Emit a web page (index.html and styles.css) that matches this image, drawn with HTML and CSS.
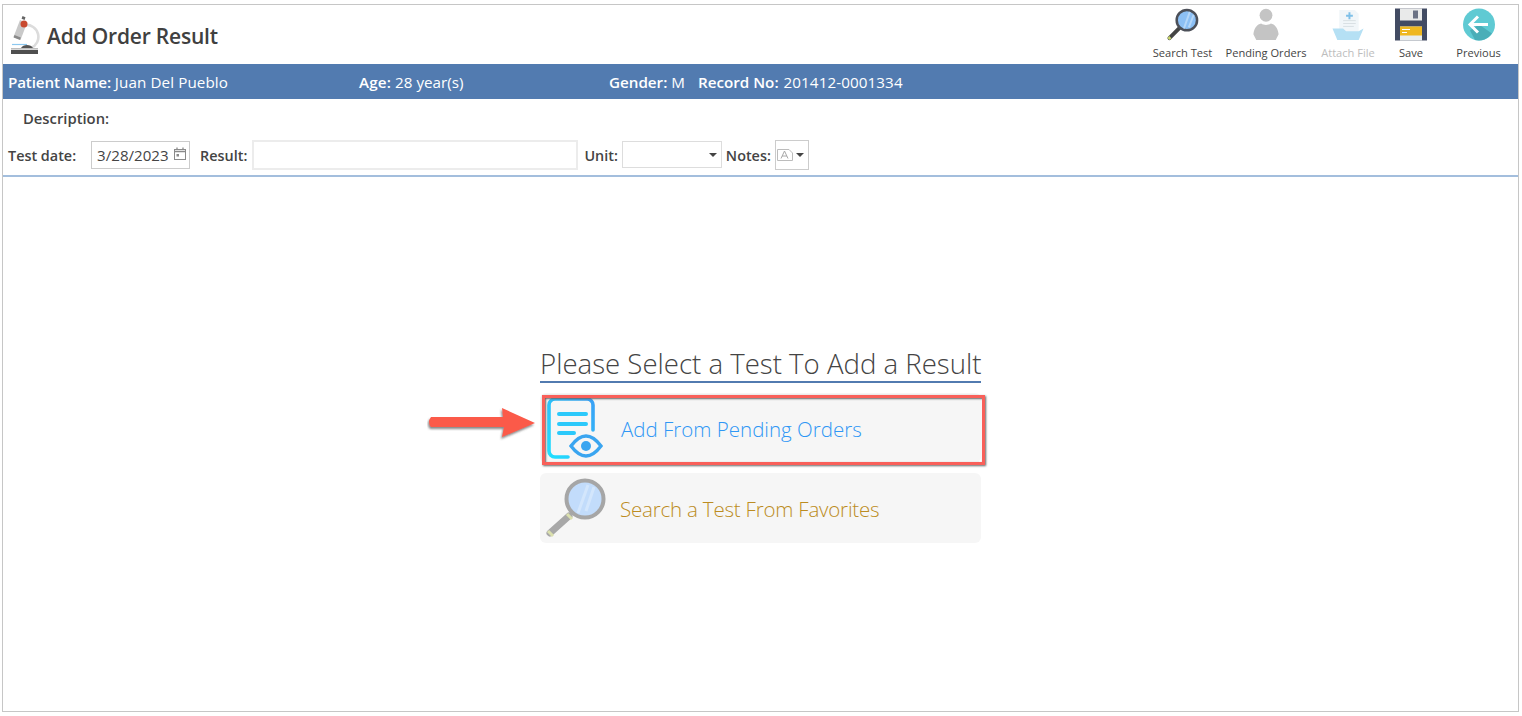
FILE: index.html
```html
<!DOCTYPE html>
<html lang="en">
<head>
<meta charset="utf-8">
<title>Add Order Result</title>
<link rel="stylesheet" href="styles.css">
</head>
<body>
<div class="frame">
  <header class="toolbar">
    <div class="title-wrap">
      <svg class="scope" viewBox="0 0 30 42" width="30" height="42">
        <path d="M15 10 A12 12 0 0 1 21 33" fill="none" stroke="#dcdcdc" stroke-width="2.600"/>
        <path d="M12.500 1 L15.500 2.200 L14.600 5 L11.600 3.800Z" fill="#666"/>
        <path d="M10 5 L17 8 L10.500 25 L3.500 22Z" fill="#c9c9c9"/>
        <path d="M4.500 20 L10.800 22.600 L10 25 L3.600 22.400Z" fill="#8a8a8a"/>
        <circle cx="14" cy="9" r="3.500" fill="#c8492f"/>
        <path d="M2 29.500 H17" stroke="#8cc8f0" stroke-width="1.200"/>
        <path d="M11 33 C13 29 21 29 23 33Z" fill="#555"/>
        <rect x="1" y="33" width="27" height="1.600" fill="#bdbdbd"/>
        <rect x="1" y="35" width="27" height="4" fill="#4f4f4f"/>
      </svg>
      <h1 class="title">Add Order Result</h1>
    </div>
    <nav class="actions">
      <div class="action act-search">
        <svg viewBox="0 0 34 34" width="34" height="34"><path d="M3 31 L14 20" stroke="#444" stroke-width="4" stroke-linecap="round"/><path d="M2 32 L4 30" stroke="#c8d66a" stroke-width="3"/><circle cx="21" cy="12.500" r="10.500" fill="#8cc0f5" stroke="#4c5059" stroke-width="2.600"/><path d="M24 4 L18 21 M28 7 L23 20" stroke="#b5d7f9" stroke-width="2"/></svg>
        <span>Search Test</span>
      </div>
      <div class="action act-pending">
        <svg viewBox="0 0 34 34" width="34" height="34"><circle cx="17" cy="7.500" r="6.600" fill="#c4c4c4"/><path d="M7 33 L4 27 C5 20 8 17 12 16 C15 18 19 18 22 16 C26 17 29 20 30 27 L27 33Z" fill="#c4c4c4"/></svg>
        <span>Pending Orders</span>
      </div>
      <div class="action act-attach muted">
        <svg viewBox="0 0 34 34" width="34" height="34"><path d="M8 2 H24 L28 6 V30 H8Z" fill="#f1f6f9"/><path d="M15 7 H17.500 V4.500 H19.500 V7 H22 V9 H19.500 V11.500 H17.500 V9 H15Z" fill="#7fc0e8"/><path d="M12 13 H25 M12 16 H25 M12 19 H23" stroke="#d8dfe3"/><path d="M1 21 H12 L15 24 L28 24 L33 21 L28 33 H6Z" fill="#b5e0f4"/></svg>
        <span>Attach File</span>
      </div>
      <div class="action act-save">
        <svg viewBox="0 0 32 32" width="32" height="32"><rect width="32" height="32" fill="#424b63"/><rect x="5" y="0" width="22" height="12" fill="#e9eaea"/><rect x="18" y="2" width="5" height="8" fill="#6b7285"/><rect x="5" y="18" width="22" height="14" fill="#e9eeee"/><rect x="5" y="18" width="22" height="9" fill="#efb81f"/><path d="M7 21 H15 M7 24 H12" stroke="#fff" stroke-width="1.200"/></svg>
        <span>Save</span>
      </div>
      <div class="action act-prev">
        <svg viewBox="0 0 32 32" width="32" height="32"><circle cx="16" cy="16" r="16" fill="#5fcad3"/><path d="M16 16 L29 25 A16 16 0 0 1 12 31.500 L7 22Z" fill="#4aaeb8"/><path d="M15 8 L7 16 L15 24 M7 16 H25" fill="none" stroke="#fff" stroke-width="3"/></svg>
        <span>Previous</span>
      </div>
    </nav>
  </header>

  <section class="patient">
    <span class="p-name"><b>Patient Name:</b> <span class="val">Juan Del Pueblo</span></span>
    <span class="p-age"><b>Age:</b> 28 year(s)</span>
    <span class="p-gender"><b>Gender:</b> M</span>
    <span class="p-record"><b>Record No:</b> <span class="val">201412-0001334</span></span>
  </section>

  <div class="desc">Description:</div>

  <form class="fields">
    <label class="lbl lbl-date">Test date:</label>
    <div class="box date">
      <span>3/28/2023</span>
      <svg viewBox="0 0 14 14" width="14" height="14"><rect x="1.500" y="2.500" width="11" height="10" fill="none" stroke="#8a8a8a"/><path d="M1.500 4.500 H12.500 M4 .5 V2.500 M10 .5 V2.500" stroke="#8a8a8a" stroke-width="1.300"/><rect x="3.500" y="7" width="2.500" height="2.500" fill="#8a8a8a"/></svg>
    </div>
    <label class="lbl lbl-result">Result:</label>
    <div class="box result"></div>
    <label class="lbl lbl-unit">Unit:</label>
    <div class="box unit"><i class="caret"></i></div>
    <label class="lbl lbl-notes">Notes:</label>
    <div class="box notes">
      <svg viewBox="0 0 16 14" width="16" height="14"><path d="M.5 1.500 H12 L15.500 5 V12.500 H.5Z" fill="#fff" stroke="#bcbcbc"/><path d="M4 10.500 L7.500 3 L11 10.500 M5 8 H10" fill="none" stroke="#a8a8a8"/></svg>
      <i class="caret"></i>
    </div>
  </form>

  <main class="content">
    <div class="picker">
      <h2 class="prompt">Please Select a Test To Add a Result</h2>
      <div class="option opt-pending">
        <svg class="opt-icon" viewBox="0 0 60 62" width="60" height="62">
          <defs><linearGradient id="g" x1="0" y1="1" x2="1" y2="0"><stop offset="0" stop-color="#1fe0ff"/><stop offset="1" stop-color="#3aa0f5"/></linearGradient></defs>
          <path d="M23 60 H10 A6 6 0 0 1 4 54 V8 A6 6 0 0 1 10 2 H42 A6 6 0 0 1 48 8 V33" fill="none" stroke="url(#g)" stroke-width="3.600" stroke-linecap="round"/>
          <path d="M14 17 H41 M14 27 H41 M14 36 H29" stroke="#2bc9fb" stroke-width="4" stroke-linecap="round"/>
          <path d="M26 49 C32 41 37 39 41 39 C45 39 50 41 56 49 C50 57 45 59 41 59 C37 59 32 57 26 49Z" fill="none" stroke="#3aa5f0" stroke-width="3.400"/>
          <circle cx="41" cy="49" r="5" fill="#3aa5f0"/>
        </svg>
        <span class="opt-label blue">Add From Pending Orders</span>
      </div>
      <div class="option">
        <svg class="opt-icon" viewBox="0 0 62 62" width="62" height="62">
          <path d="M5 56 L24 39" stroke="#a8a8a8" stroke-width="7" stroke-linecap="round"/>
          <path d="M3 54 L8 59" stroke="#dbe0ae" stroke-width="3"/>
          <path d="M22 37 L27 42" stroke="#dbe0ae" stroke-width="3"/>
          <circle cx="40" cy="22" r="18.500" fill="#c2dcfb" stroke="#a6a6a6" stroke-width="4"/>
          <path d="M43 8 L33 36 M49 10 L41 34" stroke="#d3e6fc" stroke-width="3"/>
        </svg>
        <span class="opt-label gold">Search a Test From Favorites</span>
      </div>
      <div class="callout"></div>
      <svg class="arrow" viewBox="0 0 110 34" width="110" height="34">
        <defs><filter id="s" x="-10%" y="-30%" width="120%" height="170%"><feDropShadow dx="-1" dy="2" stdDeviation="1.200" flood-color="#555" flood-opacity=".7"/></filter></defs>
        <path d="M4 10 H76 L75 1 L108 16 L75 30 L77 20 H4 Q0 15 4 10Z" fill="#fb5a4a" filter="url(#s)"/>
      </svg>
    </div>
  </main>
</div>
</body>
</html>
```

FILE: styles.css
```css
* { box-sizing: border-box; }
html, body { margin: 0; height: 100%; background: #fff; }
body {
  padding: 4px 3px 4px 2px;
  font-family: "Open Sans", "Noto Sans", sans-serif;
  color: #444;
}
.frame {
  height: 100%;
  border: 1px solid #c6c6c6;
  display: flex;
  flex-direction: column;
}
.toolbar {
  height: 59px;
  display: flex;
  justify-content: space-between;
  flex: none;
}
.title-wrap { display: flex; align-items: center; padding-left: 7px; }
.scope { margin-top: 3px; }
.title {
  margin: 2px 0 0 7px;
  font-size: 21px;
  font-weight: 600;
  color: #404040;
  letter-spacing: -.2px;
}
.actions { display: flex; padding-top: 3px; }
.action {
  display: flex;
  flex-direction: column;
  align-items: center;
  font-size: 11.100px;
  color: #444;
  white-space: nowrap;
}
.action svg { height: 33px; display: block; margin-bottom: 5px; }
.action span { line-height: 14px; }
.muted { color: #bdbdbd; }
.act-search { width: 74px; padding-left: 1px; }
.act-pending { width: 94px; }
.act-attach { width: 70px; }
.act-save { width: 56px; }
.act-prev { width: 79px; }

.patient {
  height: 35px;
  flex: none;
  background: #527bb0;
  color: #fff;
  display: flex;
  align-items: center;
  font-size: 15.200px;
  padding-left: 5px;
  white-space: nowrap;
}
.patient b { font-weight: 600; }
.p-name { width: 351px; }
.p-name b { letter-spacing: -.15px; }
.p-name .val { letter-spacing: .1px; }
.p-age { width: 250px; }
.p-age b { letter-spacing: .2px; }
.p-gender { width: 89px; }
.p-record .val { margin-left: 1px; letter-spacing: .1px; }
.desc {
  height: 38px;
  flex: none;
  display: flex;
  align-items: center;
  padding-left: 20px;
  font-size: 14.800px;
  font-weight: 600;
}
.fields {
  height: 40px;
  flex: none;
  display: flex;
  align-items: flex-start;
  padding-left: 5px;
  border-bottom: 2px solid #a3bedd;
}
.lbl { font-size: 14.400px; font-weight: 600; line-height: 18px; padding-top: 10px; white-space: nowrap; }
.box { border: 1px solid #ccc; background: #fff; display: flex; align-items: center; }
.date {
  width: 99px; height: 28px; margin: 4px 0 0 15px;
  font-size: 15.100px; padding: 0 2px 0 5px; justify-content: space-between;
}
.date svg { margin-top: -3px; flex: none; }
.lbl-result { margin-left: 10px; }
.result { width: 326px; height: 30px; margin: 3px 0 0 5px; border: 2px solid #ececec; }
.lbl-unit { margin-left: 6px; }
.unit { width: 100px; height: 27px; margin: 4px 0 0 4px; justify-content: flex-end; padding-right: 4px; border: 1px solid #ddd; }
.lbl-notes { margin-left: 4px; }
.notes { width: 34px; height: 30px; margin: 3px 0 0 4px; padding-left: 1px; gap: 3px; }
.caret { display: block; width: 0; height: 0; border: 4px solid transparent; border-top-color: #444; border-bottom: 0; }

.content {
  flex: 1;
  display: flex;
  align-items: center;
  justify-content: center;
  padding-top: 10px;
}
.picker { width: 441px; position: relative; }
.prompt {
  margin: 0 0 10px;
  font-size: 27.600px;
  font-weight: 300;
  line-height: 36px;
  height: 38px;
  border-bottom: 2px solid #527bb0;
  color: #444;
  white-space: nowrap;
}
.option {
  height: 70px;
  background: #f6f6f6;
  border-radius: 6px;
  margin-bottom: 10px;
  display: flex;
  align-items: center;
  padding: 0 0 0 5px;
}
.option:last-of-type { margin-bottom: 0; }
.opt-icon { flex: none; }
.opt-label { margin: 1px 0 0 13px; font-size: 20.500px; font-weight: 300; white-space: nowrap; }
.blue { color: #2f97f5; }
.gold { color: #bc8c22; letter-spacing: -.2px; }
.opt-pending .opt-label { margin-left: 16px; }
.callout {
  position: absolute;
  left: 2px; top: 50px;
  width: 443px; height: 70px;
  border: 3px solid #f9605a;
  box-shadow: inset 1px 1px 2px #666, 1px 1px 2px #666;
}
.arrow { position: absolute; left: -113px; top: 62px; }
```
